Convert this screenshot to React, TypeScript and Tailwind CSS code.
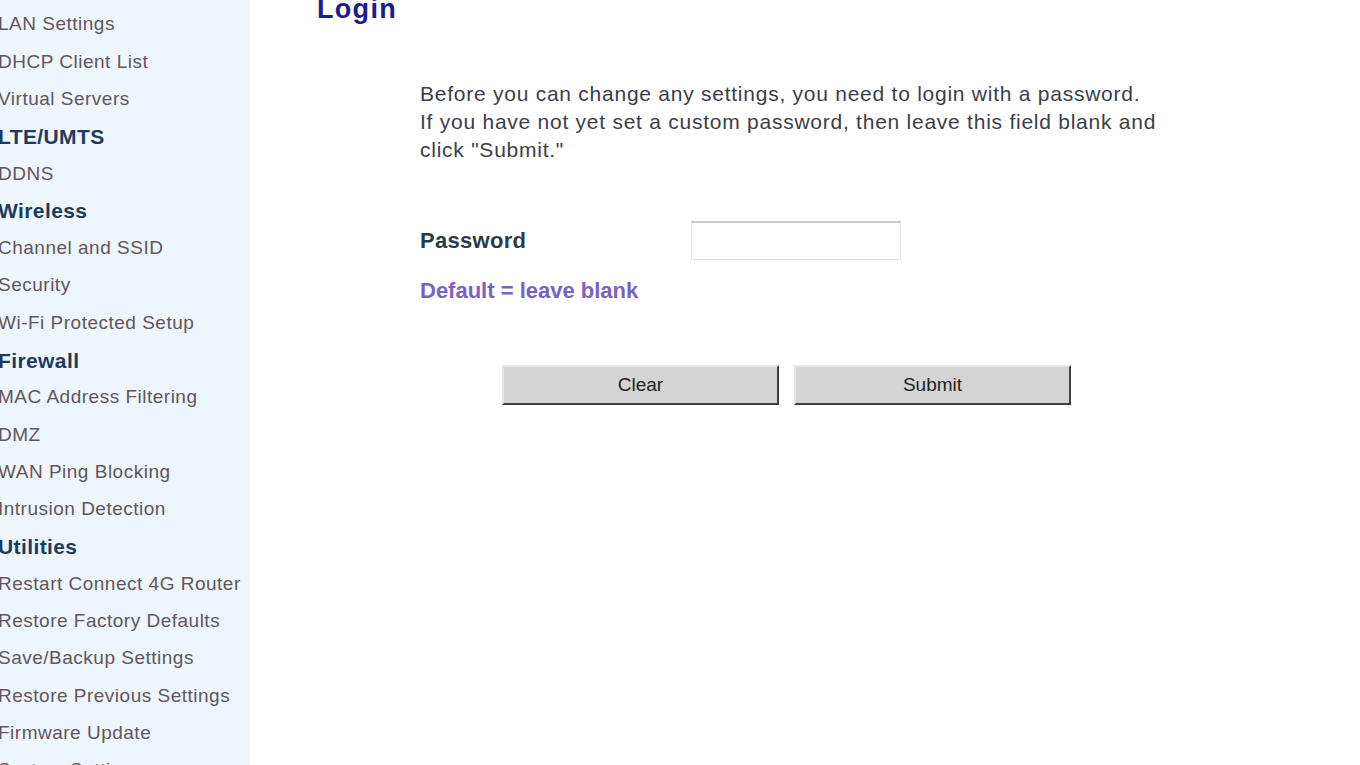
const menu: { label: string; head?: boolean }[] = [
  { label: "LAN Settings" },
  { label: "DHCP Client List" },
  { label: "Virtual Servers" },
  { label: "LTE/UMTS", head: true },
  { label: "DDNS" },
  { label: "Wireless", head: true },
  { label: "Channel and SSID" },
  { label: "Security" },
  { label: "Wi-Fi Protected Setup" },
  { label: "Firewall", head: true },
  { label: "MAC Address Filtering" },
  { label: "DMZ" },
  { label: "WAN Ping Blocking" },
  { label: "Intrusion Detection" },
  { label: "Utilities", head: true },
  { label: "Restart Connect 4G Router" },
  { label: "Restore Factory Defaults" },
  { label: "Save/Backup Settings" },
  { label: "Restore Previous Settings" },
  { label: "Firmware Update" },
  { label: "System Settings" },
];

export default function App() {
  return (
    <div
      className="flex w-[1360px] h-[765px] overflow-hidden bg-white"
      style={{ fontFamily: '"Liberation Sans", Arial, sans-serif' }}
    >
      {/* Left nav */}
      <div className="w-[250px] shrink-0 bg-[#eef5fb] pt-[6px]">
        <ul className="-ml-[2px]">
          {menu.map((m) => (
            <li
              key={m.label}
              className={`h-[37.3px] flex items-center whitespace-nowrap ${
                m.head
                  ? "text-[21px] tracking-[0.4px] font-bold text-[#1d3b5e]"
                  : "text-[19px] tracking-[0.5px] text-[#62555c]"
              }`}
            >
              {m.label}
            </li>
          ))}
        </ul>
      </div>

      {/* Main */}
      <div className="flex-1 pl-[67px]">
        <h1 className="mt-[-4px] text-[27px] leading-[27px] tracking-[1.3px] font-bold text-[#1c1c8e]">
          Login
        </h1>

        <div className="ml-[103px]">
          <p className="mt-[57px] text-[21px] leading-[28px] tracking-[0.75px] text-[#3b3e4a] w-[800px]">
            Before you can change any settings, you need to login with a password.
            <br />
            If you have not yet set a custom password, then leave this field blank and
            <br />
            click "Submit."
          </p>

          <div className="mt-[57px] flex items-center">
            <span className="w-[271px] text-[22px] tracking-[0.3px] font-bold text-[#2c3a48]">
              Password
            </span>
            <input
              type="password"
              className="w-[210px] h-[39px] border border-[#e2e2e2] border-t-2 border-t-[#c9c9c9] bg-white outline-none"
            />
          </div>

          <div className="mt-[14px] text-[22px] font-bold text-[#7a62c4]">
            Default = leave blank
          </div>

          <div className="mt-[58px] ml-[82px] flex gap-[15px]">
            <button className="w-[277px] h-[40px] bg-[#d4d4d4] border-2 border-t-[#e6e6e6] border-l-[#e6e6e6] border-b-[#3e3e3e] border-r-[#3e3e3e] text-[19px] text-[#222]">
              Clear
            </button>
            <button className="w-[277px] h-[40px] bg-[#d4d4d4] border-2 border-t-[#e6e6e6] border-l-[#e6e6e6] border-b-[#3e3e3e] border-r-[#3e3e3e] text-[19px] text-[#222]">
              Submit
            </button>
          </div>
        </div>
      </div>
    </div>
  );
}
